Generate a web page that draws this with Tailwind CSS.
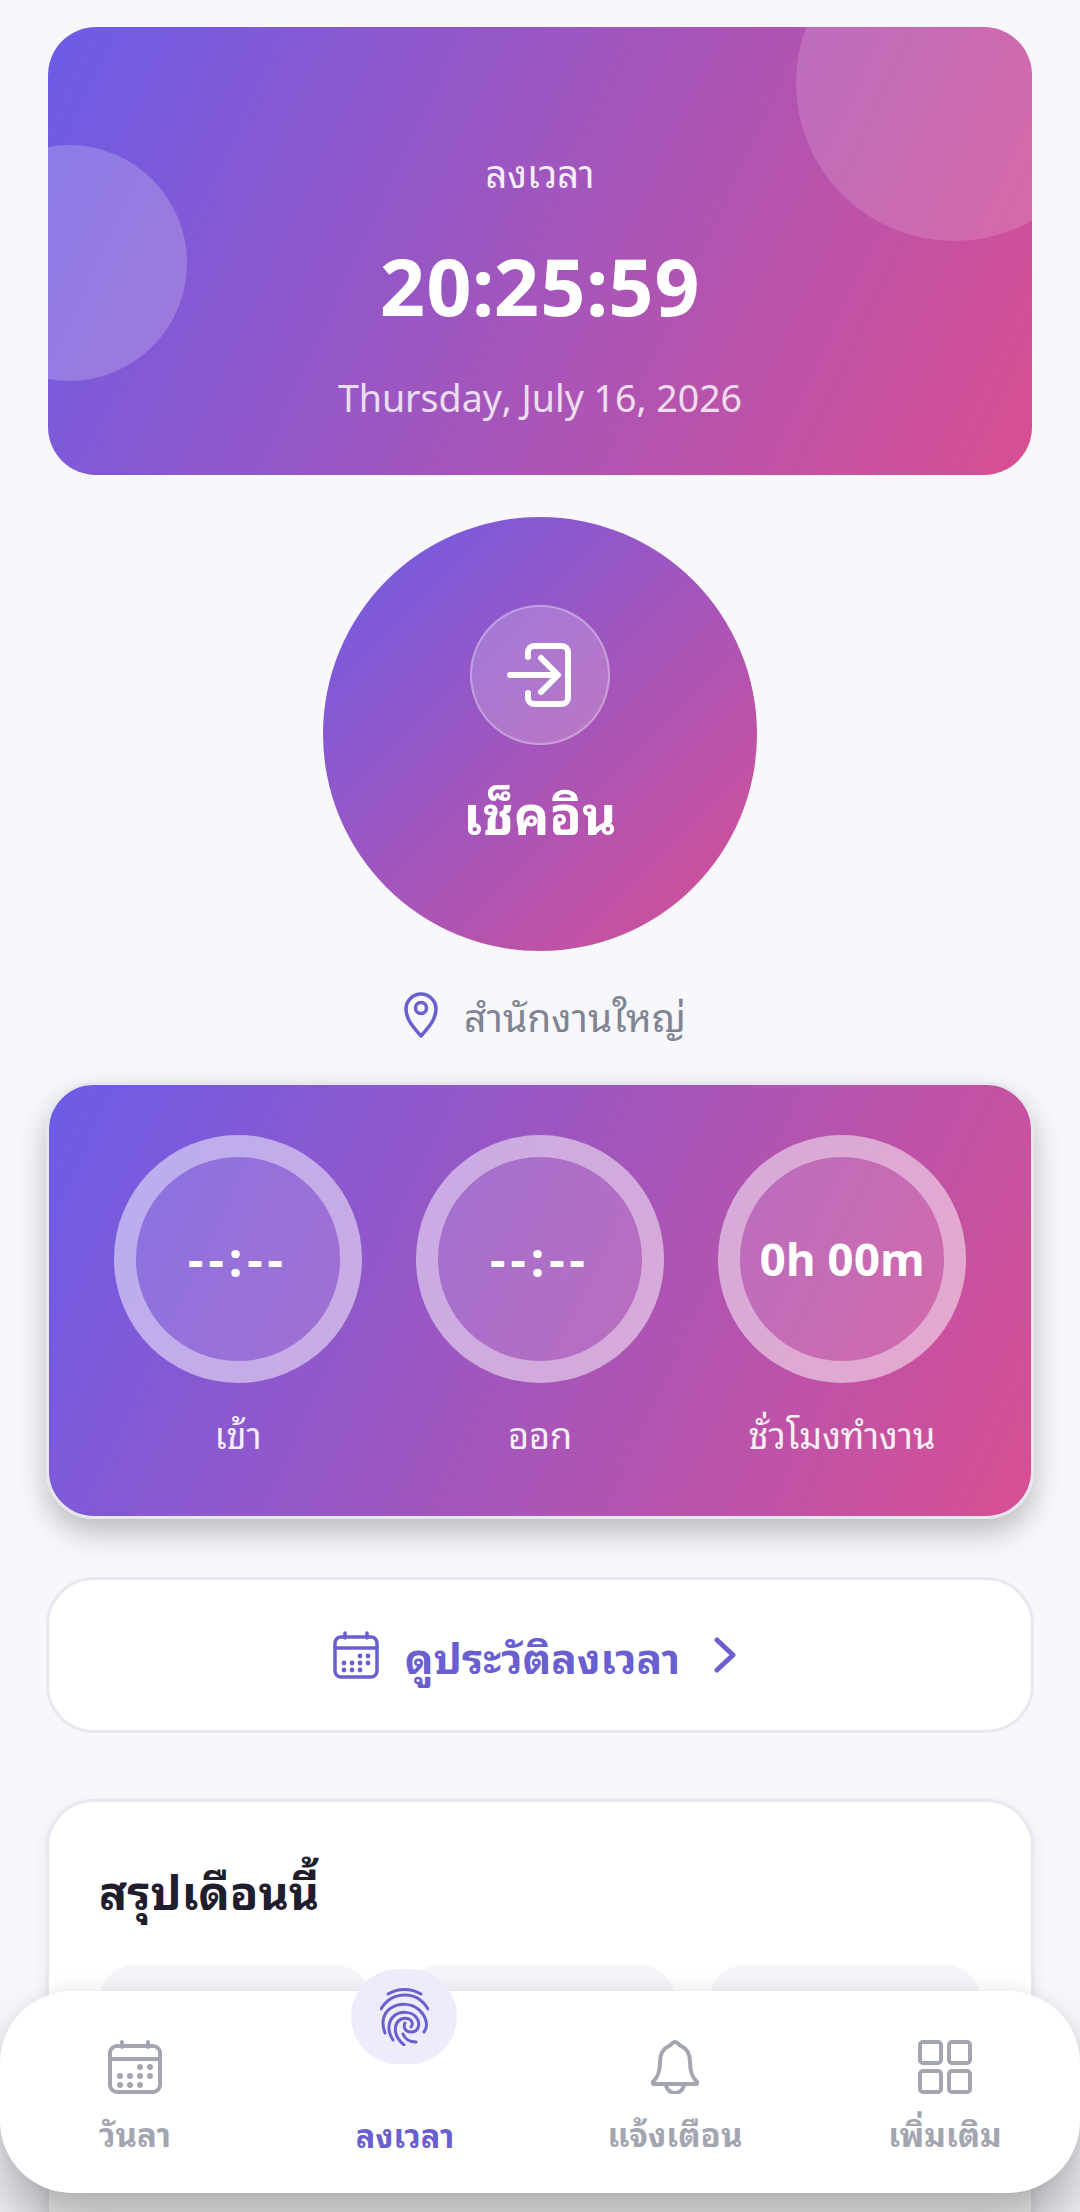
<!DOCTYPE html>
<html lang="th">
    <head>
        <meta charset="UTF-8" />
        <meta name="viewport" content="width=device-width, initial-scale=1.0" />
        <title>ลงเวลา</title>
        <script src="https://cdn.jsdelivr.net/npm/@tailwindcss/browser@4"></script>
    </head>
    <body class="bg-[#f7f7fc] [font-family:'Noto_Sans_Thai_Looped','Noto_Sans_Thai','Noto_Sans',sans-serif]">
        <div class="relative h-[2212px] w-[1080px] overflow-hidden">
            <main class="flex flex-col px-12 pt-[27px]">
                <!-- clock -->
                <section class="relative flex h-[448px] flex-col items-center overflow-hidden rounded-[48px] bg-[linear-gradient(115deg,#6c5ce7,#d94f92)] text-white">
                    <div class="absolute -top-[102px] -right-[80px] h-[316px] w-[316px] rounded-full bg-white/15"></div>
                    <div class="absolute top-[118px] -left-[97px] h-[236px] w-[236px] rounded-full bg-white/20"></div>
                    <p class="relative mt-[119px] text-[38px] leading-[50px] text-white/90">ลงเวลา</p>
                    <p class="relative mt-[37px] text-[79px] leading-[96px] font-bold">20:25:59</p>
                    <p class="relative mt-[40px] text-[37.5px] leading-[52px] text-white/80">Thursday, July 16, 2026</p>
                </section>

                <!-- check in -->
                <button class="mx-auto mt-[42px] flex h-[434px] w-[434px] flex-col items-center rounded-full bg-[linear-gradient(135deg,#6c5ce7,#d94f92)] text-white">
                    <span class="mt-[88px] flex h-[140px] w-[140px] items-center justify-center rounded-full border-2 border-white/30 bg-white/20">
                        <svg class="h-[66px] w-[66px]" viewBox="0 0 66 66" fill="none" stroke="#fff" stroke-width="6" stroke-linecap="round" stroke-linejoin="round">
                            <path d="M21 15V10a6 6 0 0 1 6-6h28a6 6 0 0 1 6 6v46a6 6 0 0 1-6 6H27a6 6 0 0 1-6-6v-5" />
                            <path d="M3 33h47M34 16l17 17-17 17" />
                        </svg>
                    </span>
                    <span class="mt-[32px] text-[53px] leading-[70px] font-bold">เช็คอิน</span>
                </button>
                <div class="mt-[38px] flex items-center justify-center gap-[26px] pl-[10px]">
                    <svg class="h-[46px] w-[34px]" viewBox="0 0 34 46" fill="none" stroke="#6a5fcf" stroke-width="3.5">
                        <path d="M17 44C9 35 2 27 2 17a15 15 0 0 1 30 0c0 10-7 18-15 27z" stroke-linejoin="round" />
                        <circle cx="17" cy="16" r="5.5" />
                    </svg>
                    <span class="text-[39px] leading-[52px] text-[#7f8493]">สำนักงานใหญ่</span>
                </div>

                <!-- today -->
                <section class="-mx-[2px] mt-[41px] flex h-[437px] flex-col rounded-[48px] border-[3px] border-[#e6e6ee] bg-[linear-gradient(115deg,#6c5ce7,#d94f92)] bg-origin-border shadow-[0_14px_30px_rgba(0,0,0,0.24)]">
                    <div class="mt-[50px] flex justify-center gap-[54px] text-white">
                        <div class="flex w-[248px] flex-col items-center">
                            <div class="flex h-[248px] w-[248px] items-center justify-center rounded-full border-[22px] border-white/50 bg-white/15 bg-clip-padding pb-[6px] text-[48px] font-bold tracking-[5px]">--:--</div>
                            <p class="mt-[25px] text-[36px] leading-[50px] text-white/90">เข้า</p>
                        </div>
                        <div class="flex w-[248px] flex-col items-center">
                            <div class="flex h-[248px] w-[248px] items-center justify-center rounded-full border-[22px] border-white/50 bg-white/15 bg-clip-padding pb-[6px] text-[48px] font-bold tracking-[5px]">--:--</div>
                            <p class="mt-[25px] text-[36px] leading-[50px] text-white/90">ออก</p>
                        </div>
                        <div class="flex w-[248px] flex-col items-center">
                            <div class="flex h-[248px] w-[248px] items-center justify-center rounded-full border-[22px] border-white/50 bg-white/15 bg-clip-padding pb-[6px] text-[45.5px] font-bold whitespace-nowrap">0h 00m</div>
                            <p class="mt-[25px] text-[36px] leading-[50px] whitespace-nowrap text-white/90">ชั่วโมงทำงาน</p>
                        </div>
                    </div>
                </section>

                <!-- history -->
                <button class="-mx-[2px] mt-[58px] flex h-[156px] items-center justify-center rounded-[48px] border-[3px] border-[#e8e8f0] bg-white pr-[11px] text-[#6c5ce7]">
                    <svg class="h-[48px] w-[46px]" viewBox="0 0 46 48" fill="none" stroke="#6a5fcf" stroke-width="3.5" stroke-linecap="round">
                        <rect x="2" y="6" width="42" height="40" rx="6" />
                        <path d="M2 17h42M12 2v5M34 2v5" />
                        <g fill="#6a5fcf" stroke="none">
                            <circle cx="27" cy="25" r="2.4" /><circle cx="35" cy="25" r="2.4" />
                            <circle cx="11" cy="32" r="2.4" /><circle cx="19" cy="32" r="2.4" /><circle cx="27" cy="32" r="2.4" /><circle cx="35" cy="32" r="2.4" />
                            <circle cx="11" cy="39" r="2.4" /><circle cx="19" cy="39" r="2.4" /><circle cx="27" cy="39" r="2.4" />
                        </g>
                    </svg>
                    <span class="ml-[26px] text-[42.5px] leading-[60px] font-bold text-[#6a5fcf]">ดูประวัติลงเวลา</span>
                    <svg class="ml-[34px] h-[36px] w-[22px]" viewBox="0 0 22 36" fill="none" stroke="#6a5fcf" stroke-width="5" stroke-linecap="round" stroke-linejoin="round">
                        <path d="M3 3l16 15L3 33" />
                    </svg>
                </button>

                <!-- month summary -->
                <section class="-mx-[2px] mt-[66px] h-[500px] rounded-[48px] border-[3px] border-[#e8e8f0] bg-white px-[50px] shadow-[0_4px_14px_rgba(0,0,0,0.08)]">
                    <h2 class="mt-[55px] text-[46.5px] leading-[64px] font-bold text-[#1e1e2e]">สรุปเดือนนี้</h2>
                    <div class="mt-[44px] grid grid-cols-3 gap-[33px]">
                        <div class="h-[200px] rounded-[36px] bg-[#f5f5fa]"></div>
                        <div class="h-[200px] rounded-[36px] bg-[#f5f5fa]"></div>
                        <div class="h-[200px] rounded-[36px] bg-[#f5f5fa]"></div>
                    </div>
                </section>
            </main>

            <!-- bottom nav -->
            <nav class="absolute top-[1991px] left-0 grid h-[202px] w-[1080px] grid-cols-4 rounded-[72px] bg-white shadow-[0_40px_60px_rgba(0,0,0,0.3),0_0_16px_rgba(0,0,0,0.06)]">
                <a class="flex flex-col items-center pt-[49px] text-[#a3a6b0]">
                    <svg class="h-[54px] w-[54px]" viewBox="0 0 54 54" fill="none" stroke="#a3a6b0" stroke-width="4" stroke-linecap="round">
                        <rect x="2" y="6" width="50" height="46" rx="7" />
                        <path d="M2 19h50M14 2v5M40 2v5" />
                        <g fill="#a3a6b0" stroke="none">
                            <circle cx="32" cy="27" r="3" /><circle cx="42" cy="27" r="3" />
                            <circle cx="12" cy="36" r="3" /><circle cx="22" cy="36" r="3" /><circle cx="32" cy="36" r="3" /><circle cx="42" cy="36" r="3" />
                            <circle cx="12" cy="45" r="3" /><circle cx="22" cy="45" r="3" /><circle cx="32" cy="45" r="3" />
                        </g>
                    </svg>
                    <span class="mt-[16px] text-[33px] leading-[46px] font-bold">วันลา</span>
                </a>
                <a class="relative flex flex-col items-center pt-[119px] text-[#6a5fcf]">
                    <span class="absolute -top-[22px] left-[81px] flex h-[95px] w-[106px] items-center justify-center rounded-full bg-[#eeecfb]">
                        <svg class="h-[58px] w-[49px]" viewBox="0 0 49 58" fill="none" stroke="#6a5fcf" stroke-width="3" stroke-linecap="round">
                            <path d="M8 6C18 0 31 0 41 6" />
                            <path d="M1 21C7 11 15 7 25 7S42 11 48 21" />
                            <path d="M5 45C1 35 3 25 11 20C19 15 31 15 38 21C46 27 49 38 44 44" />
                            <path d="M13 52C7 43 8 33 14 28C20 23 31 23 36 29C41 35 39 44 31 44C25 44 23 39 25 35" />
                            <path d="M24 57C17 51 14 44 16 37C18 31 24 29 29 31C33 33 33 37 31 39" />
                            <path d="M36 54C30 54 25 51 23 46" />
                        </svg>
                    </span>
                    <span class="text-[32.5px] leading-[46px] font-bold">ลงเวลา</span>
                </a>
                <a class="flex flex-col items-center pt-[49px] text-[#a3a6b0]">
                    <svg class="h-[54px] w-[48px]" viewBox="0 0 48 54" fill="none" stroke="#a3a6b0" stroke-width="4" stroke-linecap="round" stroke-linejoin="round">
                        <path d="M24 2c-3 0-4 3-6 4C11 9 9 15 9 22c0 10-2 15-7 20-1 1 0 2 1 2h42c1 0 2-1 1-2-5-5-7-10-7-20 0-7-2-13-9-16-2-1-3-4-6-4z" />
                        <path d="M15 44a9 9 0 0 0 18 0" />
                    </svg>
                    <span class="mt-[16px] text-[33px] leading-[46px] font-bold">แจ้งเตือน</span>
                </a>
                <a class="flex flex-col items-center pt-[49px] text-[#a3a6b0]">
                    <svg class="h-[54px] w-[54px]" viewBox="0 0 54 54" fill="none" stroke="#a3a6b0" stroke-width="4" stroke-linejoin="round">
                        <rect x="2" y="2" width="21" height="21" rx="3" /><rect x="31" y="2" width="21" height="21" rx="3" />
                        <rect x="2" y="31" width="21" height="21" rx="3" /><rect x="31" y="31" width="21" height="21" rx="3" />
                    </svg>
                    <span class="mt-[16px] text-[33px] leading-[46px] font-bold">เพิ่มเติม</span>
                </a>
            </nav>
        </div>
    </body>
</html>
